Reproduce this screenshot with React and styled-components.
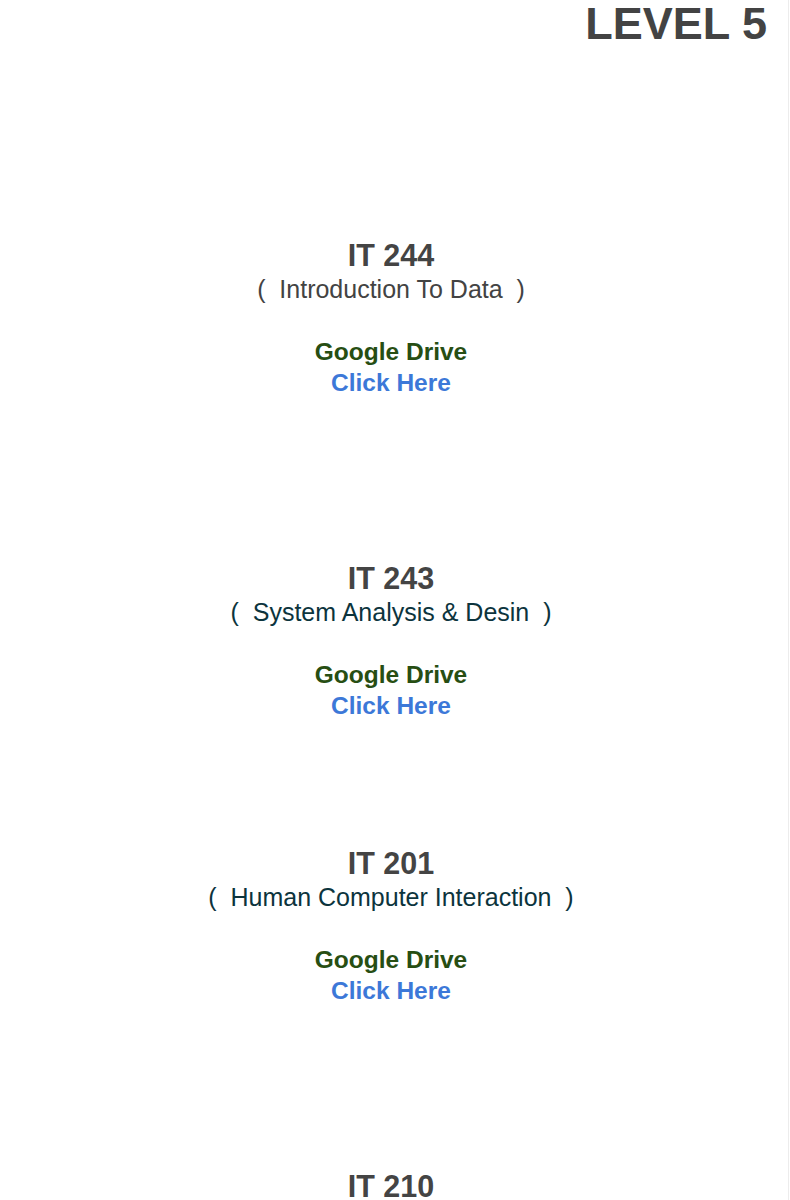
import React from "react";
import styled, { createGlobalStyle } from "styled-components";

const GlobalStyle = createGlobalStyle`
  html, body {
    margin: 0;
    padding: 0;
    background: #ffffff;
  }
  body {
    font-family: "Liberation Sans", Arial, Helvetica, sans-serif;
  }
`;

const Page = styled.div`
  width: 789px;
  box-sizing: border-box;
  border-right: 1px solid #ececec;
  display: flex;
  flex-direction: column;
  padding-bottom: 200px;
`;

const Header = styled.header`
  display: flex;
  justify-content: flex-end;
  padding-right: 21px;
`;

const LevelTitle = styled.h1`
  margin: 0;
  font-size: 45px;
  line-height: 47px;
  font-weight: 700;
  color: #434343;
`;

const Section = styled.section`
  display: flex;
  flex-direction: column;
  align-items: center;
  text-align: center;
  padding-right: 6px;
  margin-top: ${(p) => p.$gap}px;
`;

const CourseCode = styled.h2`
  margin: 0;
  font-size: 30.5px;
  line-height: 37px;
  font-weight: 700;
  color: #444444;
`;

const CourseName = styled.p`
  margin: 0 0 31px;
  font-size: 25px;
  line-height: 31px;
  color: ${(p) => p.$color};
  white-space: pre;
`;

const DriveLabel = styled.div`
  font-size: 24.5px;
  line-height: 31px;
  font-weight: 700;
  color: #274e13;
`;

const DriveLink = styled.a`
  font-size: 24.5px;
  line-height: 31px;
  font-weight: 700;
  color: #3c78d8;
  text-decoration: none;
`;

const courses = [
  { code: "IT 244", name: "Introduction To Data", color: "#434343", gap: 190 },
  { code: "IT 243", name: "System Analysis & Desin", color: "#0c343d", gap: 162 },
  { code: "IT 201", name: "Human Computer Interaction", color: "#0c343d", gap: 124 },
  { code: "IT 210", name: null, color: "#0c343d", gap: 162 },
];

export default function App() {
  return (
    <>
      <GlobalStyle />
      <Page>
        <Header>
          <LevelTitle>LEVEL 5</LevelTitle>
        </Header>
        {courses.map((c) => (
          <Section key={c.code} $gap={c.gap}>
            <CourseCode>{c.code}</CourseCode>
            {c.name && (
              <>
                <CourseName $color={c.color}>
                  {"(\u00a0 " + c.name + "\u00a0 )"}
                </CourseName>
                <DriveLabel>Google Drive</DriveLabel>
                <DriveLink href="#">Click Here</DriveLink>
              </>
            )}
          </Section>
        ))}
      </Page>
    </>
  );
}
